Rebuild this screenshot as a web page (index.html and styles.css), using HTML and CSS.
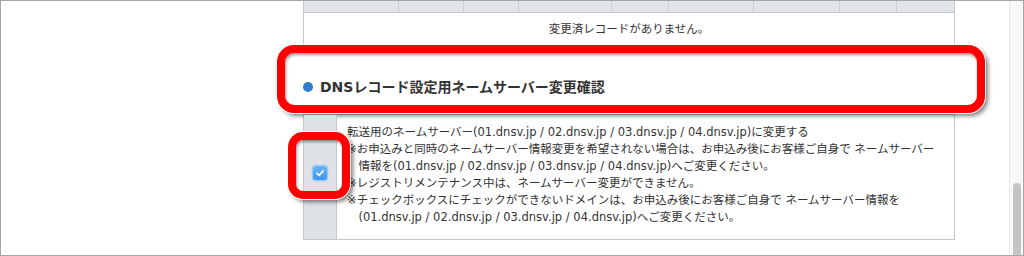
FILE: index.html
```html
<!DOCTYPE html>
<html lang="ja">
<head>
  <meta charset="UTF-8" />
  <title>ネームサーバー変更確認</title>
  <link rel="stylesheet" href="styles.css">
</head>
<body>
  <div class="frame">
    <div class="page">
      <div class="panel">
        <table class="log">
          <tr class="log-head">
            <th class="c1"></th><th class="c2"></th><th class="c3"></th>
            <th class="c4"></th><th class="c5"></th><th class="c6"></th>
            <th class="c7"></th><th class="c8"></th><th class="c9"></th>
          </tr>
          <tr>
            <td class="empty" colspan="9">変更済レコードがありません。</td>
          </tr>
        </table>

        <h3 class="section-title">
          <span class="dot"></span>DNSレコード設定用ネームサーバー変更確認
          <span class="mark mark-title"></span>
        </h3>

        <div class="confirm">
          <div class="confirm-check">
            <span class="checkbox">
              <svg width="14" height="14" viewBox="0 0 14 14">
                <path d="M4 7.3 L6.1 9.4 L10.2 4.8" fill="none" stroke="#fff" stroke-width="1.7" stroke-linecap="round" stroke-linejoin="round"/>
              </svg>
            </span>
            <span class="mark mark-check"></span>
          </div>
          <div class="confirm-body">
            <p>転送用のネームサーバー(01.dnsv.jp / 02.dnsv.jp / 03.dnsv.jp / 04.dnsv.jp)に変更する</p>
            <p class="note">※お申込みと同時のネームサーバー情報変更を希望されない場合は、お申込み後にお客様ご自身で ネームサーバー<br>情報を(01.dnsv.jp / 02.dnsv.jp / 03.dnsv.jp / 04.dnsv.jp)へご変更ください。</p>
            <p class="note">※レジストリメンテナンス中は、ネームサーバー変更ができません。</p>
            <p class="note">※チェックボックスにチェックができないドメインは、お申込み後にお客様ご自身で ネームサーバー情報を<br>(01.dnsv.jp / 02.dnsv.jp / 03.dnsv.jp / 04.dnsv.jp)へご変更ください。</p>
          </div>
        </div>
      </div>
    </div>

    <div class="scrollbar">
      <div class="thumb"></div>
    </div>
  </div>
</body>
</html>
```

FILE: styles.css
```css
* {
  box-sizing: border-box;
}

body {
  margin: 0;
  font-family: 'DejaVu Sans', 'Noto Sans CJK JP', sans-serif;
  font-size: 11.5px;
  color: #333;
  background: #fff;
}

.frame {
  width: 1024px;
  height: 256px;
  border: 1px solid #a6a6a6;
  display: flex;
  overflow: hidden;
}

.page {
  flex: 1;
  padding-left: 302px;
}

.panel {
  width: 652px;
}

/* 変更履歴テーブル */
.log {
  width: 652px;
  border-collapse: collapse;
  table-layout: fixed;
}

.log-head th {
  height: 11px;
  padding: 0;
  background: #e1e4e9;
  border-right: 1px solid #c9cdd3;
  border-bottom: 1px solid #c5c9cf;
}

.log-head th.c1 { width: 95px; border-left: 1px solid #c8c8c8; }
.log-head th.c2 { width: 65px; }
.log-head th.c3 { width: 55px; }
.log-head th.c4 { width: 93px; }
.log-head th.c5 { width: 57px; }
.log-head th.c6 { width: 85px; }
.log-head th.c7 { width: 86px; }
.log-head th.c8 { width: 57px; }
.log-head th.c9 { width: 58px; border-right: 1px solid #c8c8c8; }

.empty {
  height: 33px;
  padding: 0 0 2px;
  text-align: center;
  border-left: 1px solid #c8c8c8;
  border-right: 1px solid #c8c8c8;
  border-bottom: 1px solid #c8c8c8;
}

/* 見出し */
.section-title {
  position: relative;
  margin: 31px 0 17px;
  height: 20px;
  line-height: 20px;
  font-size: 14px;
  font-weight: bold;
  color: #333;
  display: flex;
  align-items: center;
}

.dot {
  width: 10px;
  height: 10px;
  border-radius: 50%;
  background: #2f7fd0;
  margin-right: 7px;
}

/* 赤枠（注釈） */
.mark {
  position: absolute;
  border: 8px solid #ff0000;
  border-radius: 17px;
  box-shadow: 0 0 0 1px #fff, 3px 3px 4px rgba(0,0,0,0.5), inset 1px 2px 3px rgba(0,0,0,0.4);
  pointer-events: none;
}

.mark-title {
  left: -26px;
  top: -32px;
  width: 708px;
  height: 68px;
}

.mark-check {
  left: -16px;
  top: 17px;
  width: 62px;
  height: 67px;
  border-radius: 15px;
}

/* 確認欄 */
.confirm {
  display: flex;
  height: 126px;
  border: 1px solid #c8c8c8;
}

.confirm-check {
  position: relative;
  width: 33px;
  background: #dfe2e7;
  border-right: 1px solid #c8c8c8;
  display: flex;
  justify-content: center;
  align-items: center;
  padding-bottom: 8px;
}

.checkbox {
  width: 14px;
  height: 14px;
  border-radius: 3px;
  background: linear-gradient(#6bb4f7, #3d94ee);
  box-shadow: 0 0 0 1px #9ccaf3, 0 0 2px 1px rgba(90,160,235,0.35);
  display: flex;
}

.confirm-body {
  padding: 9px 10px 0;
}

.confirm-body p {
  margin: 0;
  line-height: 17px;
  white-space: nowrap;
}

.confirm-body .note {
  padding-left: 1em;
  text-indent: -1em;
}

/* スクロールバー */
.scrollbar {
  width: 14px;
  margin-right: 0;
  border-left: 1px solid #e6e6e6;
  background: #f8f8f8;
  padding: 182px 0 0 3px;
}

.thumb {
  width: 8px;
  height: 100%;
  background: #c4c4c4;
  border-radius: 4px 4px 0 0;
}
```
